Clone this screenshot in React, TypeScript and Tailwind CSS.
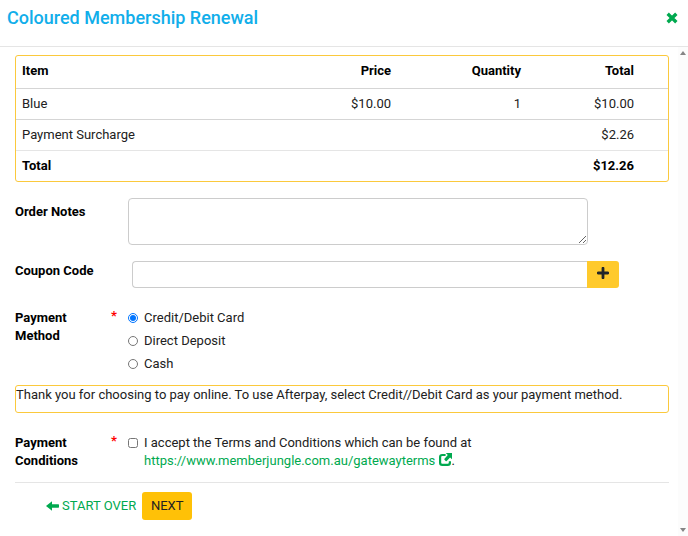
import { useState } from "react";

const items = [
  { name: "Blue", price: "$10.00", quantity: "1", total: "$10.00" },
];

const methods = ["Credit/Debit Card", "Direct Deposit", "Cash"];

const CloseIcon = () => (
  <svg viewBox="0 0 12 12" className="w-3 h-3" aria-hidden="true">
    <path d="M2.9 3 9.1 9M9.1 3 2.9 9" stroke="currentColor" strokeWidth="3.4" strokeLinecap="square" strokeLinejoin="round" />
  </svg>
);

const PlusIcon = () => (
  <svg viewBox="0 0 12 12" className="w-3 h-3" aria-hidden="true">
    <path d="M6 1.2v9.6M1.2 6h9.6" stroke="currentColor" strokeWidth="2.8" strokeLinecap="round" />
  </svg>
);

const ArrowLeftIcon = () => (
  <svg viewBox="0 0 13 10" className="w-[13px] h-[10px]" aria-hidden="true">
    <path d="M0 5 6 .3V3.3h6.4q.6 0 .6.6v2.2q0 .6-.6.6H6v3Z" fill="currentColor" />
  </svg>
);

const ExternalIcon = () => (
  <svg viewBox="0 0 13 13" className="inline-block align-[-1px] w-[13px] h-[13px]" aria-hidden="true">
    <path d="M6.6 2H3.2Q1.1 2 1.1 4.1v5.7q0 2.1 2.1 2.1h5.6q2.1 0 2.1-2.1V8.2" fill="none" stroke="currentColor" strokeWidth="2.2" />
    <path d="M6.8 0H13v6.2l-1.9-1.8-3.4 3.5q-.5.5-1 0l-1.2-1.2q-.5-.5 0-1L8.8 2Z" fill="currentColor" />
  </svg>
);

const Required = () => (
  <span className="w-[17px] shrink-0 text-[#f00] font-bold leading-[14px]" aria-hidden="true">*</span>
);

const App = () => {
  const [method, setMethod] = useState(methods[0]);

  return (
    <div className="flex flex-col min-h-screen bg-white font-['Roboto',sans-serif] text-[13px] leading-[18px] text-[#212121]">
      <header className="flex items-start justify-between h-[47px] pl-[7px] pr-[10px] pt-[6px] border-b border-[#e5e5e5]">
        <h1 className="text-[18px] leading-6 font-medium text-[#11aeea]">Coloured Membership Renewal</h1>
        <button type="button" aria-label="Close" className="pt-[6px] text-[#00a94f]">
          <CloseIcon />
        </button>
      </header>

      <div className="flex flex-1">
        <main className="flex-1 pl-[15px] pr-[9px] pt-2">
          <div className="border border-[#fbc93d] rounded-[3px]">
            <table className="w-full table-fixed text-right">
              <thead className="text-black">
                <tr className="h-8 border-b border-[#d5d5d5]">
                  <th className="text-left pl-[6px] pb-[2px]">Item</th>
                  <th className="w-[130px] pb-[2px]">Price</th>
                  <th className="w-[130px] pb-[2px]">Quantity</th>
                  <th className="w-[147px] pr-[34px] pb-[2px]">Total</th>
                </tr>
              </thead>
              <tbody>
                {items.map((item) => (
                  <tr key={item.name} className="h-[31px] border-b border-[#d5d5d5]">
                    <td className="text-left pl-[6px]">{item.name}</td>
                    <td>{item.price}</td>
                    <td>{item.quantity}</td>
                    <td className="pr-[34px]">{item.total}</td>
                  </tr>
                ))}
                <tr className="h-[31px] border-b border-[#e5e5e5]">
                  <td colSpan={3} className="text-left pl-[6px]">Payment Surcharge</td>
                  <td className="pr-[34px]">$2.26</td>
                </tr>
                <tr className="h-[31px] font-bold text-black">
                  <td colSpan={3} className="text-left pl-[6px]">Total</td>
                  <td className="pr-[34px]">$12.26</td>
                </tr>
              </tbody>
            </table>
          </div>

          <form onSubmit={(e) => e.preventDefault()}>
            <div className="flex mt-4">
              <label htmlFor="notes" className="w-[113px] shrink-0 pt-[5px] font-bold text-black">Order Notes</label>
              <textarea id="notes" className="block w-[460px] h-[47px] border border-[#ccc] rounded-[4px] resize" />
            </div>

            <div className="flex mt-4">
              <label htmlFor="coupon" className="w-[117px] shrink-0 pt-px font-bold text-black">Coupon Code</label>
              <input id="coupon" type="text" className="w-[455px] h-[27px] px-2 border border-r-0 border-[#ccc] rounded-l-[4px]" />
              <button type="button" aria-label="Add coupon" className="flex justify-center w-8 h-[27px] pt-[6px] rounded-r-[3px] bg-[#ffca2c] text-[#212529]">
                <PlusIcon />
              </button>
            </div>

            <div className="flex mt-[21px]" role="radiogroup" aria-labelledby="method-label">
              <div id="method-label" className="w-24 shrink-0 pr-6 font-bold text-black">Payment Method</div>
              <Required />
              <div className="flex flex-col gap-[5px]">
                {methods.map((name) => (
                  <label key={name} className="flex items-center gap-[6px]">
                    <input type="radio" name="method" className="w-[10px] h-[10px]" checked={method === name} onChange={() => setMethod(name)} />
                    {name}
                  </label>
                ))}
              </div>
            </div>

            <p className="h-7 mt-3 border border-[#fbc93d] rounded-[3px]">
              Thank you for choosing to pay online. To use Afterpay, select Credit//Debit Card as your payment method.
            </p>

            <div className="flex mt-[21px]">
              <div className="w-24 shrink-0 pr-6 font-bold text-black">Payment Conditions</div>
              <Required />
              <div className="flex items-start gap-[6px]">
                <input id="terms" type="checkbox" className="w-[10px] h-[10px] mt-1" />
                <div>
                  <label htmlFor="terms">I accept the Terms and Conditions which can be found at</label>
                  <br />
                  <a href="https://www.memberjungle.com.au/gatewayterms" className="text-[#00a94f]">
                    https://www.memberjungle.com.au/gatewayterms <ExternalIcon />
                  </a>
                  .
                </div>
              </div>
            </div>

            <div className="flex items-center gap-[6px] mt-3 pt-[9px] pl-[31px] border-t border-[#e5e5e5]">
              <button type="button" className="flex items-center gap-[3px] text-[#00a94f]">
                <ArrowLeftIcon />
                START OVER
              </button>
              <button type="submit" className="w-[50px] h-7 pb-px rounded-[3px] bg-[#ffc107]">NEXT</button>
            </div>
          </form>
        </main>

        <div className="flex flex-col justify-between items-center w-[10px] py-1 bg-[#fcfcfc] text-[#858585]" aria-hidden="true">
          <svg viewBox="0 0 6 4" className="w-[6px] h-1"><path d="M0 4 3 0l3 4Z" fill="currentColor" /></svg>
          <svg viewBox="0 0 6 4" className="w-[6px] h-1"><path d="M0 0h6L3 4Z" fill="currentColor" /></svg>
        </div>
      </div>
    </div>
  );
};

export default App;
